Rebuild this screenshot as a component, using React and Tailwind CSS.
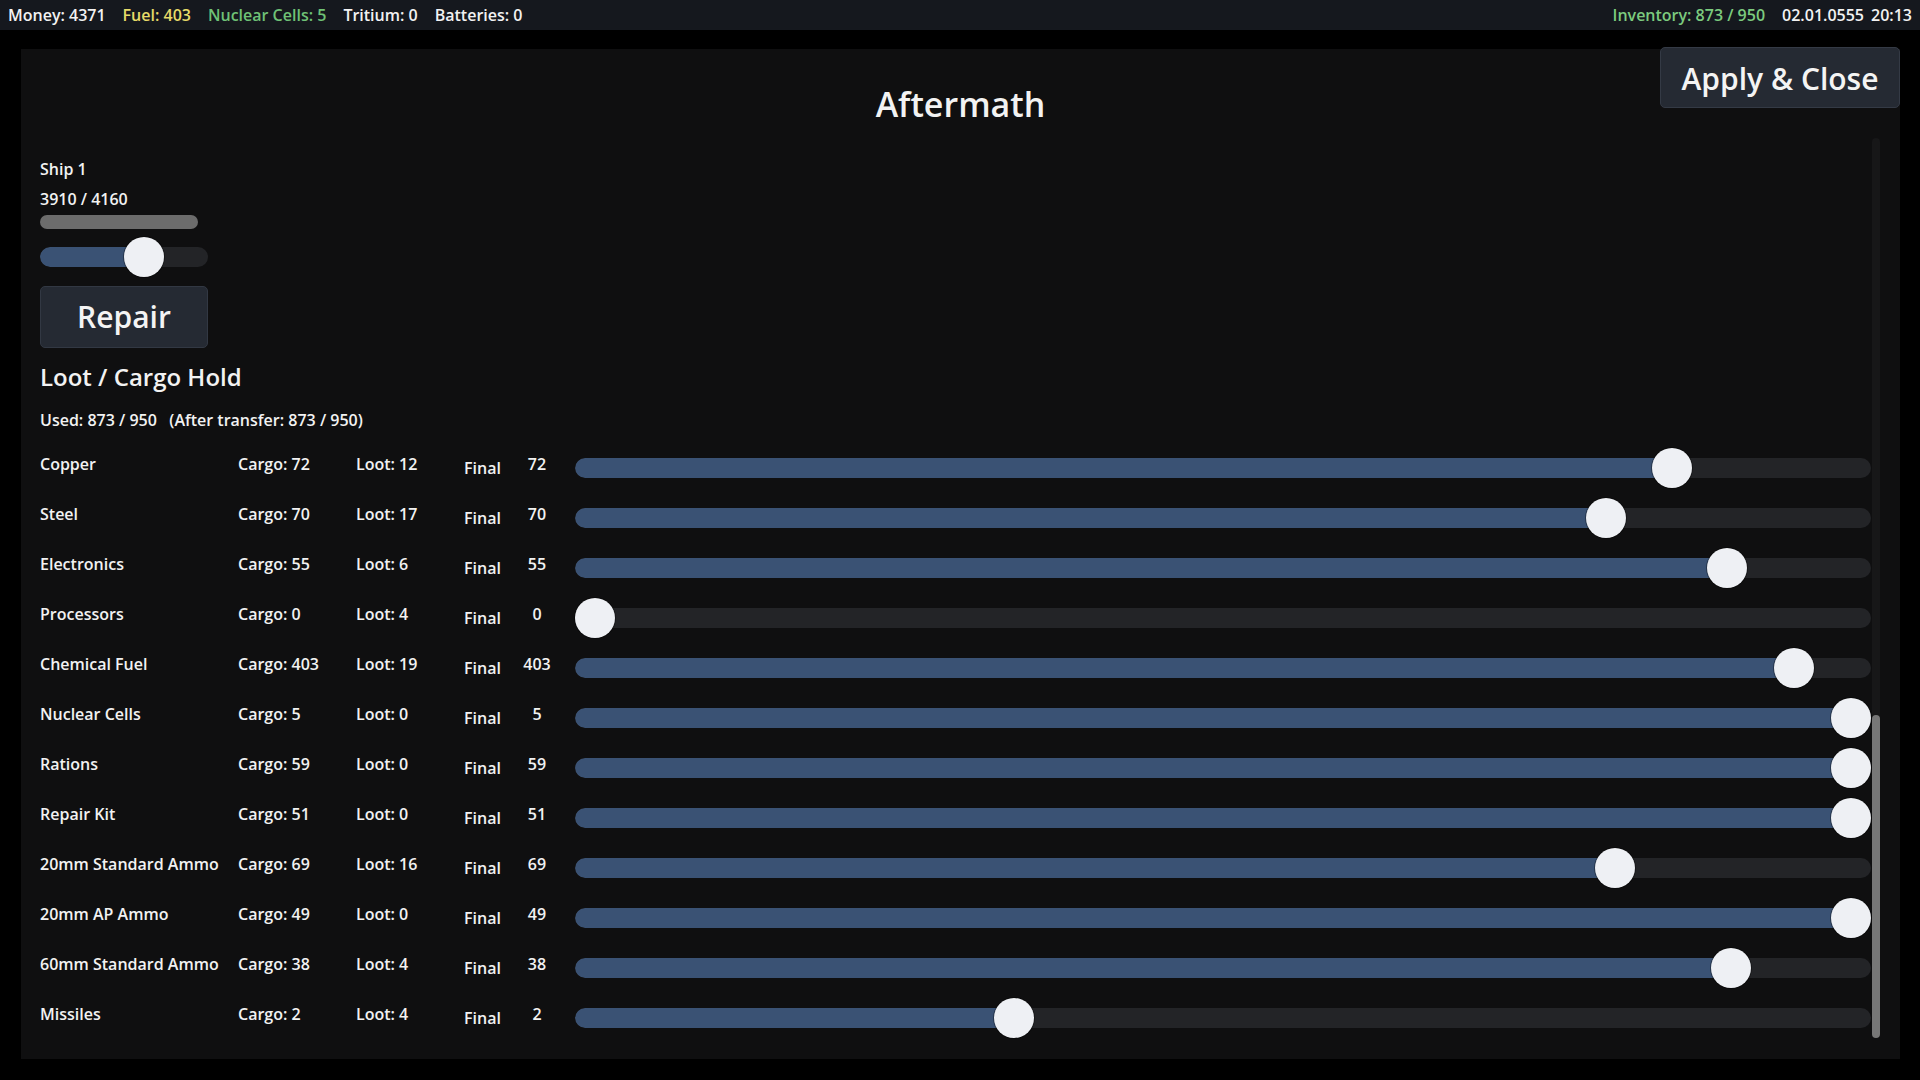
import React from "react";

const items = [
  ["Copper", 72, 12, 72],
  ["Steel", 70, 17, 70],
  ["Electronics", 55, 6, 55],
  ["Processors", 0, 4, 0],
  ["Chemical Fuel", 403, 19, 403],
  ["Nuclear Cells", 5, 0, 5],
  ["Rations", 59, 0, 59],
  ["Repair Kit", 51, 0, 51],
  ["20mm Standard Ammo", 69, 16, 69],
  ["20mm AP Ammo", 49, 0, 49],
  ["60mm Standard Ammo", 38, 4, 38],
  ["Missiles", 2, 4, 2],
];

function Slider({ width, frac }) {
  const d = 40;
  const center = d / 2 + frac * (width - d);
  return (
    <div className="relative h-[40px] flex items-center shrink-0" style={{ width }}>
      <div className="h-[20px] w-full rounded-full bg-[#232427] overflow-hidden">
        <div className="h-full bg-[#3a5274] rounded-l-full" style={{ width: center }} />
      </div>
      <div
        className="absolute top-0 w-[40px] h-[40px] rounded-full bg-[#eef0f4] shadow-[0_0_0_1px_rgba(0,0,0,0.35)]"
        style={{ left: center - d / 2 }}
      />
    </div>
  );
}

export default function App() {
  return (
    <div
      className="relative w-[1920px] h-[1080px] bg-black overflow-hidden text-[#f2f2f2] font-semibold"
      style={{ fontFamily: '"Open Sans", "Noto Sans", sans-serif' }}
    >
      {/* top bar */}
      <div className="h-[30px] bg-[#15181e] flex items-center justify-between px-[8px] text-[16px] leading-[30px]">
        <div className="flex gap-[17px]">
          <span>Money: 4371</span>
          <span className="text-[#e6da68]">Fuel: 403</span>
          <span className="text-[#6fc276]">Nuclear Cells: 5</span>
          <span>Tritium: 0</span>
          <span>Batteries: 0</span>
        </div>
        <div className="flex gap-[17px]">
          <span className="text-[#7ccb7e]">Inventory: 873 / 950</span>
          <span className="flex gap-[7px]">
            <span>02.01.0555</span>
            <span>20:13</span>
          </span>
        </div>
      </div>

      {/* panel */}
      <div className="relative mt-[19px] ml-[21px] w-[1879px] h-[1010px] bg-[#0f0f10] pl-[19px]">
        <div className="pt-[35px] h-[77px] text-center text-[34px] leading-[40px] pr-[19px]">Aftermath</div>

        <div className="mt-[32px] text-[16px] leading-[22px]">Ship 1</div>
        <div className="mt-[8px] text-[16px] leading-[22px]">3910 / 4160</div>
        <div className="mt-[5px] w-[158px] h-[14px] rounded-full bg-[#6c6c6c]" />
        <div className="mt-[8px]">
          <Slider width={168} frac={0.656} />
        </div>
        <button className="mt-[9px] w-[168px] h-[62px] rounded-[5px] bg-[#252a33] border border-[#323843] text-[30px] leading-[40px] font-semibold text-[#f4f4f4]">
          Repair
        </button>
        <div className="mt-[13px] h-[32px] text-[24px] leading-[32px]">Loot / Cargo Hold</div>
        <div className="mt-[16px] text-[16px] leading-[22px] whitespace-pre">
          {"Used: 873 / 950   (After transfer: 873 / 950)"}
        </div>

        <div className="mt-[12px] flex flex-col">
          {items.map(([name, cargo, loot, fin]) => {
            const total = cargo + loot;
            const frac = total === 0 ? 0 : fin / total;
            return (
              <div key={name} className="h-[50px] flex items-center text-[16px] leading-[22px]">
                <div className="w-[198px] self-start pt-[10px]">{name}</div>
                <div className="w-[118px] self-start pt-[10px]">Cargo: {cargo}</div>
                <div className="w-[108px] self-start pt-[10px]">Loot: {loot}</div>
                <div className="w-[46px] self-start pt-[14px]">Final</div>
                <div className="w-[54px] self-start pt-[10px] text-center">{fin}</div>
                <div className="ml-[11px]">
                  <Slider width={1296} frac={frac} />
                </div>
              </div>
            );
          })}
        </div>

        {/* scrollbar */}
        <div className="absolute top-[89px] right-[20px] w-[8px] h-[900px] rounded-full bg-[#171718]">
          <div className="absolute bottom-0 left-0 w-[8px] h-[323px] rounded-full bg-[#777777]" />
        </div>
      </div>

      {/* Apply & Close */}
      <button className="absolute top-[47px] right-[20px] w-[240px] h-[61px] pt-[2px] rounded-[5px] bg-[#252a33] border border-[#343a45] text-[30px] leading-[40px] font-semibold text-[#f4f4f4]">
        Apply &amp; Close
      </button>
    </div>
  );
}
